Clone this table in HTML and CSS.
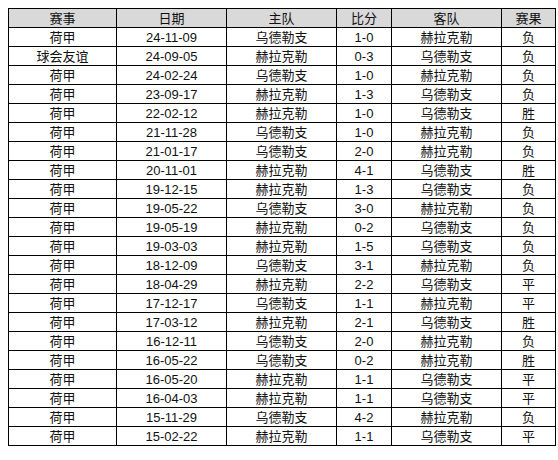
FILE: index.html
```html
<!DOCTYPE html>
<html>
<head>
<meta charset="utf-8">
<link rel="stylesheet" href="styles.css">
</head>
<body>
<table class="matches">
<colgroup>
<col class="c1"><col class="c2"><col class="c3"><col class="c4"><col class="c5"><col class="c6">
</colgroup>
<thead>
<tr><th>赛事</th><th>日期</th><th>主队</th><th>比分</th><th>客队</th><th>赛果</th></tr>
</thead>
<tbody>
<tr><td>荷甲</td><td>24-11-09</td><td>乌德勒支</td><td>1-0</td><td>赫拉克勒</td><td>负</td></tr>
<tr><td>球会友谊</td><td>24-09-05</td><td>赫拉克勒</td><td>0-3</td><td>乌德勒支</td><td>负</td></tr>
<tr><td>荷甲</td><td>24-02-24</td><td>乌德勒支</td><td>1-0</td><td>赫拉克勒</td><td>负</td></tr>
<tr><td>荷甲</td><td>23-09-17</td><td>赫拉克勒</td><td>1-3</td><td>乌德勒支</td><td>负</td></tr>
<tr><td>荷甲</td><td>22-02-12</td><td>赫拉克勒</td><td>1-0</td><td>乌德勒支</td><td>胜</td></tr>
<tr><td>荷甲</td><td>21-11-28</td><td>乌德勒支</td><td>1-0</td><td>赫拉克勒</td><td>负</td></tr>
<tr><td>荷甲</td><td>21-01-17</td><td>乌德勒支</td><td>2-0</td><td>赫拉克勒</td><td>负</td></tr>
<tr><td>荷甲</td><td>20-11-01</td><td>赫拉克勒</td><td>4-1</td><td>乌德勒支</td><td>胜</td></tr>
<tr><td>荷甲</td><td>19-12-15</td><td>赫拉克勒</td><td>1-3</td><td>乌德勒支</td><td>负</td></tr>
<tr><td>荷甲</td><td>19-05-22</td><td>乌德勒支</td><td>3-0</td><td>赫拉克勒</td><td>负</td></tr>
<tr><td>荷甲</td><td>19-05-19</td><td>赫拉克勒</td><td>0-2</td><td>乌德勒支</td><td>负</td></tr>
<tr><td>荷甲</td><td>19-03-03</td><td>赫拉克勒</td><td>1-5</td><td>乌德勒支</td><td>负</td></tr>
<tr><td>荷甲</td><td>18-12-09</td><td>乌德勒支</td><td>3-1</td><td>赫拉克勒</td><td>负</td></tr>
<tr><td>荷甲</td><td>18-04-29</td><td>赫拉克勒</td><td>2-2</td><td>乌德勒支</td><td>平</td></tr>
<tr><td>荷甲</td><td>17-12-17</td><td>乌德勒支</td><td>1-1</td><td>赫拉克勒</td><td>平</td></tr>
<tr><td>荷甲</td><td>17-03-12</td><td>赫拉克勒</td><td>2-1</td><td>乌德勒支</td><td>胜</td></tr>
<tr><td>荷甲</td><td>16-12-11</td><td>乌德勒支</td><td>2-0</td><td>赫拉克勒</td><td>负</td></tr>
<tr><td>荷甲</td><td>16-05-22</td><td>乌德勒支</td><td>0-2</td><td>赫拉克勒</td><td>胜</td></tr>
<tr><td>荷甲</td><td>16-05-20</td><td>赫拉克勒</td><td>1-1</td><td>乌德勒支</td><td>平</td></tr>
<tr><td>荷甲</td><td>16-04-03</td><td>赫拉克勒</td><td>1-1</td><td>乌德勒支</td><td>平</td></tr>
<tr><td>荷甲</td><td>15-11-29</td><td>乌德勒支</td><td>4-2</td><td>赫拉克勒</td><td>负</td></tr>
<tr><td>荷甲</td><td>15-02-22</td><td>赫拉克勒</td><td>1-1</td><td>乌德勒支</td><td>平</td></tr>
</tbody>
</table>
</body>
</html>
```
FILE: styles.css
```css
html, body {
  margin: 0;
  padding: 0;
  background: #ffffff;
}
body {
  padding: 8px;
  font-family: "Liberation Sans", "Noto Sans CJK SC", sans-serif;
  font-size: 13px;
  color: #111111;
}
.matches {
  border-collapse: collapse;
  table-layout: fixed;
  width: 548px;
}
.matches .c1 { width: 108px; }
.matches .c2 { width: 110px; }
.matches .c3 { width: 110px; }
.matches .c4 { width: 55px; }
.matches .c5 { width: 110px; }
.matches .c6 { width: 54px; }
.matches th,
.matches td {
  border: 1px solid #000000;
  padding: 0;
  height: 18px;
  line-height: 17px;
  text-align: center;
  font-weight: normal;
  white-space: nowrap;
  overflow: hidden;
}
.matches th {
  background: #d9d9d9;
}
```
